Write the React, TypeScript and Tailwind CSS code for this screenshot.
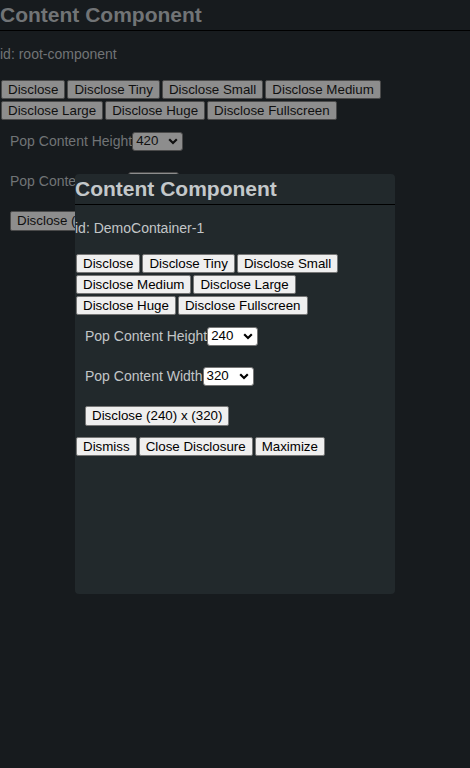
import React from "react";

const font = { fontFamily: '"Liberation Sans", Arial, sans-serif' };

function Btn({ children, dim }: { children: React.ReactNode; dim?: boolean }) {
  return (
    <button
      className={
        dim
          ? "m-px inline-flex h-[19px] items-center rounded-[2px] border border-[#4a4a4a] bg-[#8d8d8d] px-[6px] text-[13.333px] leading-none whitespace-nowrap text-[#101010]"
          : "m-px inline-flex h-[19px] items-center rounded-[2px] border border-[#767676] bg-[#efefef] px-[6px] text-[13.333px] leading-none whitespace-nowrap text-black"
      }
    >
      {children}
    </button>
  );
}

function Sel({ value, dim }: { value: string; dim?: boolean }) {
  return (
    <span
      className={
        dim
          ? "inline-flex h-[19px] w-[51px] items-center justify-between rounded-[3px] border border-[#4a4a4a] bg-[#8d8d8d] pl-[3px] pr-[4px] text-[13.333px] leading-none text-[#101010]"
          : "inline-flex h-[19px] w-[51px] items-center justify-between rounded-[3px] border border-[#767676] bg-white pl-[3px] pr-[4px] text-[13.333px] leading-none text-black"
      }
    >
      <span>{value}</span>
      <svg width="10" height="7" viewBox="0 0 10 7">
        <path d="M1.2 1.3 L5 5 L8.8 1.3" fill="none" stroke="currentColor" strokeWidth="2.2" />
      </svg>
    </span>
  );
}

function Content({ id, h, w, dim, popup }: { id: string; h: string; w: string; dim?: boolean; popup?: boolean }) {
  const text = dim ? "text-[#717476]" : "text-[#c2c6c8]";
  const headText = dim ? "text-[#717476]" : "text-[#c4c8ca]";
  const btns = ["Disclose", "Disclose Tiny", "Disclose Small", "Disclose Medium", "Disclose Large", "Disclose Huge", "Disclose Fullscreen"];
  return (
    <div>
      <h2 className={`h-[31px] border-b border-black text-[21px] font-bold leading-[30px] ${headText}`}>Content Component</h2>
      <div className={`pt-[14px] pb-[16px] text-[14px] leading-[18px] ${text}`}>id: {id}</div>
      <div className="flex flex-wrap">
        {btns.map((b) => (
          <Btn key={b} dim={dim}>
            {b}
          </Btn>
        ))}
      </div>
      <div className={`flex h-[40px] items-center p-[10px] text-[14px] ${text}`}>
        <span>Pop Content Height</span>
        <Sel value={h} dim={dim} />
      </div>
      <div className={`flex h-[40px] items-center p-[10px] text-[14px] ${text}`}>
        <span>Pop Content Width</span>
        <Sel value={w} dim={dim} />
      </div>
      <div className="flex h-[40px] items-center p-[10px]">
        <button
          className={
            dim
              ? "inline-flex h-[20px] items-center rounded-[2px] border border-[#4a4a4a] bg-[#8d8d8d] px-[6px] text-[13.333px] leading-none whitespace-nowrap text-[#101010]"
              : "inline-flex h-[20px] items-center rounded-[2px] border border-[#767676] bg-[#efefef] px-[6px] text-[13.333px] leading-none whitespace-nowrap text-black"
          }
        >
          Disclose ({h}) x ({w})
        </button>
      </div>
      {popup && (
        <div className="flex flex-wrap">
          <Btn>Dismiss</Btn>
          <Btn>Close Disclosure</Btn>
          <Btn>Maximize</Btn>
        </div>
      )}
    </div>
  );
}

export default function App() {
  return (
    <div className="relative min-h-[768px] overflow-hidden bg-[#171b1e]" style={font}>
      <Content id="root-component" h="420" w="320" dim />
      <div className="absolute left-[75px] top-[174px] h-[420px] w-[320px] rounded-[4px] bg-[#22292c]">
        <Content id="DemoContainer-1" h="240" w="320" popup />
      </div>
    </div>
  );
}
